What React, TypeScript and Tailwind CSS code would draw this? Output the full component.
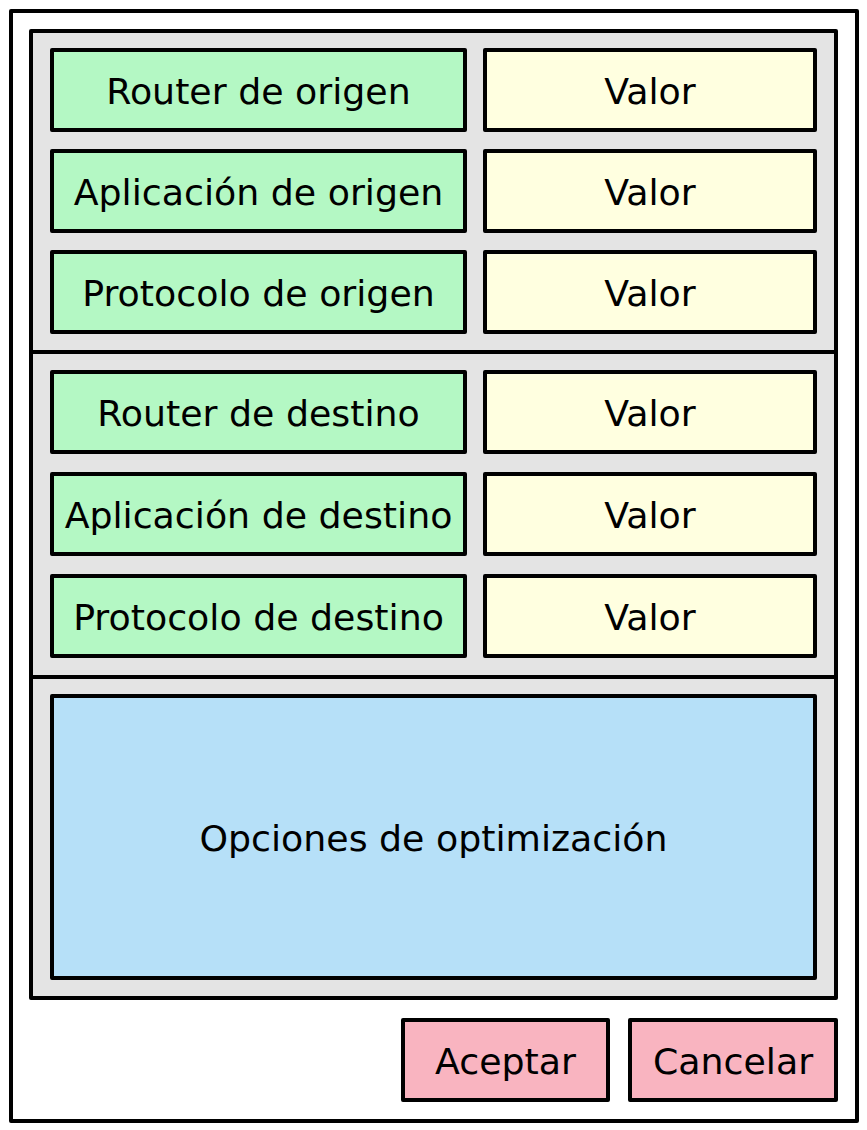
import React from "react";

const font = { fontFamily: '"DejaVu Sans", "Liberation Sans", sans-serif' };

function Row({ label }: { label: string }) {
  return (
    <div className="flex gap-[16px] h-[84px]">
      <div className="w-[417px] h-full flex items-center justify-center pt-[4px] border-[4px] border-black rounded-[2px] bg-[#b4f8c4] text-[36.3px] text-black whitespace-nowrap">
        {label}
      </div>
      <div className="flex-1 h-full flex items-center justify-center pt-[4px] border-[4px] border-black rounded-[2px] bg-[#ffffe0] text-[36.3px] text-black">
        Valor
      </div>
    </div>
  );
}

export default function App() {
  return (
    <div className="w-[867px] h-[1130px] bg-white pt-[9px] pl-[9px]" style={font}>
      <div className="w-[850px] h-[1114px] border-[4px] border-black rounded-[2px] pt-[16px] pl-[16px] pr-[17px] flex flex-col">
        <div className="w-[809px] border-[4px] border-black rounded-[2px] bg-[#e4e4e4] flex flex-col">
          <div className="flex flex-col gap-[17px] pt-[15px] pb-[16px] px-[17px]">
            <Row label="Router de origen" />
            <Row label="Aplicación de origen" />
            <Row label="Protocolo de origen" />
          </div>
          <div className="h-[4px] bg-black" />
          <div className="flex flex-col gap-[18px] pt-[16px] pb-[17px] px-[17px]">
            <Row label="Router de destino" />
            <Row label="Aplicación de destino" />
            <Row label="Protocolo de destino" />
          </div>
          <div className="h-[4px] bg-black" />
          <div className="pt-[15px] pb-[16px] px-[17px]">
            <div className="h-[286px] flex items-center justify-center pt-[4px] border-[4px] border-black rounded-[2px] bg-[#b6e0f8] text-[36.3px] text-black">
              Opciones de optimización
            </div>
          </div>
        </div>
        <div className="w-[809px] flex justify-end gap-[18px] mt-[18px]">
          <div className="w-[209px] h-[84px] flex items-center justify-center pt-[4px] border-[4px] border-black rounded-[2px] bg-[#f9b4c0] text-[36.3px] text-black">
            Aceptar
          </div>
          <div className="w-[210px] h-[84px] flex items-center justify-center pt-[4px] border-[4px] border-black rounded-[2px] bg-[#f9b4c0] text-[36.3px] text-black">
            Cancelar
          </div>
        </div>
      </div>
    </div>
  );
}
